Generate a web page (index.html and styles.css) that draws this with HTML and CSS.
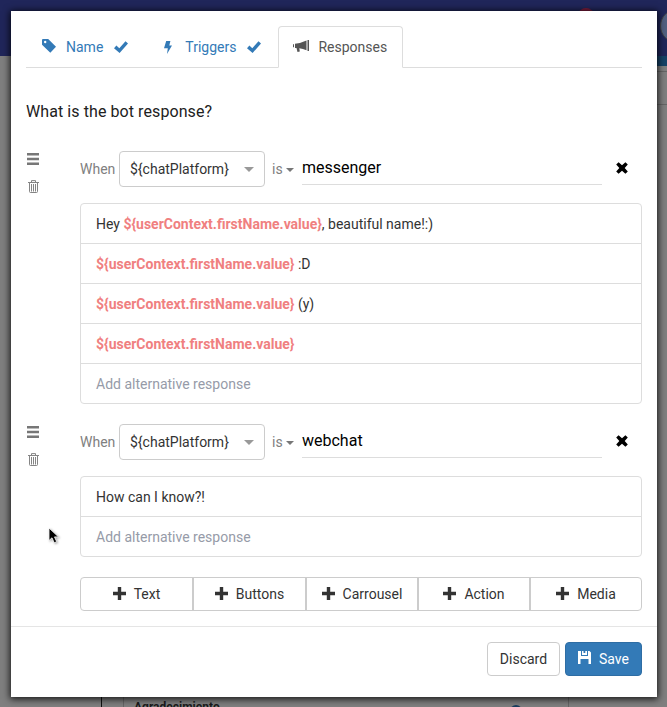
FILE: index.html
```
<!DOCTYPE html>
<html lang="en">
<head>
<meta charset="utf-8">
<title>Bot responses</title>
<link rel="stylesheet" href="styles.css">
</head>
<body>
<svg class="sprite" aria-hidden="true">
  <symbol id="check" viewBox="0 0 14 12"><path d="M0 7.2 2.400 4.600 5.300 7.200 11.500.2 14 2.400 5.600 12Z"/></symbol>
  <symbol id="plus" viewBox="0 0 13 13"><path d="M4.800 0h3.400v4.800H13v3.400H8.200V13H4.800V8.200H0V4.800h4.800Z"/></symbol>
  <symbol id="bars" viewBox="0 0 12 12"><path d="M0 0h12v2.400H0ZM0 4.800h12v2.400H0ZM0 9.600h12V12H0Z"/></symbol>
  <symbol id="trash" viewBox="0 0 11 13"><path fill="none" stroke="currentColor" stroke-width=".9" d="M3.500 2V.6h4V2M0 2.500h11M1.500 3v8.500q0 1 1 1h6q1 0 1-1V3M3.500 4v7.500M5.500 4v7.500M7.500 4v7.500"/></symbol>
  <symbol id="cross" viewBox="0 0 12 12"><path d="M2.600.2 6 3.300 9.400.2 11.800 2.600 8.700 6 11.800 9.400 9.400 11.800 6 8.700 2.600 11.800.2 9.400 3.300 6 .2 2.600Z"/></symbol>
</svg>
<div class="backdrop" aria-hidden="true">
  <div class="topbar"><i class="badge"></i><i class="avatar"></i></div>
  <div class="strip"></div>
  <div class="rule rule-a"></div>
  <div class="rule rule-b"></div>
  <div class="under"><b>Agradecimiento</b><i class="dot"></i></div>
</div>
<main class="modal">
  <section class="body">
    <nav class="tabs">
      <a class="tab"><svg class="tag" viewBox="0 0 14 14"><path fill-rule="evenodd" d="M0 1Q0 0 1 0h5.200L14 7.800 8.300 13.800 0 5.800ZM2 3a1.200 1.200 0 1 0 2.400 0A1.200 1.200 0 1 0 2 3Z"/></svg><span>Name</span><svg class="check"><use href="#check"/></svg></a>
      <a class="tab triggers"><svg class="bolt" viewBox="0 0 8 13"><path d="M2.200 0h4.200L5.300 4.500H8L3 13l.8-5.800H0Z"/></svg><span>Triggers</span><svg class="check"><use href="#check"/></svg></a>
      <a class="tab active"><svg class="horn" viewBox="0 0 16 12"><path d="M14.500 0H16v11h-1.500ZM0 4.200h1v3H0ZM2 3.800q5-.3 11.500-3.300v9.800Q10 8.800 6.300 8.200l.5 3.200-2.300.6-1-4H2Z"/></svg><span>Responses</span></a>
    </nav>
    <h1>What is the bot response?</h1>
    <div class="group">
      <div class="tools"><svg class="bars"><use href="#bars"/></svg><svg class="trash"><use href="#trash"/></svg></div>
      <div class="content">
        <div class="condition">
          <span class="when">When</span><span class="select">${chatPlatform}<i class="arrow"></i></span><span class="is">is</span><i class="caret"></i><span class="input">messenger</span><svg class="cross"><use href="#cross"/></svg>
        </div>
        <ul class="list">
          <li>Hey <b>${userContext.firstName.value}</b>, beautiful name!:)</li>
          <li><b>${userContext.firstName.value}</b> :D</li>
          <li><b>${userContext.firstName.value}</b> (y)</li>
          <li><b>${userContext.firstName.value}</b></li>
          <li class="placeholder">Add alternative response</li>
        </ul>
      </div>
    </div>
    <div class="group">
      <div class="tools"><svg class="bars"><use href="#bars"/></svg><svg class="trash"><use href="#trash"/></svg></div>
      <div class="content">
        <div class="condition">
          <span class="when">When</span><span class="select">${chatPlatform}<i class="arrow"></i></span><span class="is">is</span><i class="caret"></i><span class="input">webchat</span><svg class="cross"><use href="#cross"/></svg>
        </div>
        <ul class="list">
          <li>How can I know?!</li>
          <li class="placeholder">Add alternative response</li>
        </ul>
      </div>
    </div>
    <div class="adders">
      <button><svg class="plus"><use href="#plus"/></svg>Text</button>
      <button><svg class="plus"><use href="#plus"/></svg>Buttons</button>
      <button><svg class="plus"><use href="#plus"/></svg>Carrousel</button>
      <button><svg class="plus"><use href="#plus"/></svg>Action</button>
      <button><svg class="plus"><use href="#plus"/></svg>Media</button>
    </div>
  </section>
  <footer class="footer">
    <button class="btn discard">Discard</button>
    <button class="btn save"><svg class="disk" viewBox="0 0 13 13"><path fill-rule="evenodd" d="M0 0h3v5h7V0h1.500L13 1.500V13h-2.500V8h-8v5H0ZM4 0h1.500v2H7.300V0H9v4H4Z"/></svg>Save</button>
  </footer>
</main>
<svg class="cursor" viewBox="0 0 12 18"><path d="M1 1v12.500l3-2.700 2.200 5 2.500-1.100-2.200-4.800h4Z" stroke="#fff" stroke-width=".8"/></svg>
</body>
</html>
```
FILE: styles.css
```
* { box-sizing: border-box; }
body {
  margin: 0;
  width: 667px;
  height: 707px;
  padding: 11px 10px 10px 11px;
  overflow: hidden;
  background: #7f7f7f;
  color: #333;
  font: 14px/20px Roboto, sans-serif;
}
svg { display: block; flex: none; fill: currentColor; }
.sprite { position: absolute; width: 0; height: 0; }
.backdrop { position: absolute; inset: 0; overflow: hidden; }
.topbar { height: 56px; background: #20265a; }
.badge { position: absolute; left: 578px; top: 8px; width: 16px; height: 16px; border-radius: 50%; background: #7d1c3c; }
.avatar { position: absolute; left: 660px; top: 9px; width: 34px; height: 34px; border: 1px solid #444; border-radius: 50%; background: #536080; }
.strip { height: 10px; margin-left: 650px; background: #164266; }
.rule { position: absolute; left: 650px; right: 0; height: 1px; background: #666; }
.rule-a { top: 71px; }
.rule-b { top: 104px; }
.under {
  position: absolute;
  left: 101px;
  top: 690px;
  width: 468px;
  height: 30px;
  padding-left: 32px;
  border-left: 1px solid #111;
  border-right: 1px solid #666;
  background: linear-gradient(#666, #666) 21px 0 / 1px 100% no-repeat;
  color: #1a1a1a;
  font-size: 12px;
  line-height: 34px;
}
.dot { position: absolute; left: 408px; top: 15px; width: 12px; height: 12px; border-radius: 50%; background: #193d5e; }
.modal {
  position: relative;
  height: 686px;
  background: #fff;
  box-shadow: 0 1px 7px 1px rgba(0, 0, 0, .85);
}
.body { height: 616px; padding: 15px 15px 0; border-bottom: 1px solid #e5e5e5; }
.tabs { display: flex; height: 42px; border-bottom: 1px solid #ddd; }
.tab {
  display: flex;
  align-items: center;
  height: 42px;
  padding: 0 15px;
  border: 1px solid transparent;
  color: #337ab7;
}
.tab.active { border-color: #ddd; border-bottom-color: #fff; border-radius: 4px 4px 0 0; color: #555; }
.tag { width: 14px; height: 14px; margin: -3px 10px 0 0; }
.bolt { width: 8px; height: 13px; margin-right: 13px; }
.horn { width: 16px; height: 12px; margin: -2px 9px 0 -1px; }
.check { width: 14px; height: 12px; margin: -1px 0 0 11px; }
.triggers { padding-left: 19px; margin-right: 1px; }
h1 { margin: 34px 0 29px; color: #212121; font-size: 16px; font-weight: 400; line-height: 20px; letter-spacing: .08px; }
.group { display: flex; margin-bottom: 20px; }
.tools { width: 54px; padding: 2px 1px; color: #777; }
.bars { width: 12px; height: 12px; }
.trash { width: 11px; height: 13px; margin: 15px 0 0 1px; }
.content { flex: 1; }
.condition { display: flex; height: 36px; margin-bottom: 16px; color: #808080; }
.when { width: 39px; padding-top: 8px; }
.select {
  display: flex;
  align-items: center;
  justify-content: space-between;
  width: 146px;
  padding: 0 10px;
  border: 1px solid #ccc;
  border-radius: 4px;
  color: #333;
}
.arrow { border: 5px solid transparent; border-top-color: #999; border-bottom: 0; }
.is { width: 14px; margin-left: 7px; padding-top: 8px; }
.caret { align-self: flex-start; margin: 17px 8px 0 0; border: 4px solid transparent; border-top-color: #777; border-bottom: 0; }
.input { width: 300px; height: 34px; padding-top: 7px; border-bottom: 1px solid #ddd; color: #000; font-size: 16px; }
.cross { width: 12px; height: 12px; margin: 11px 0 0 14px; color: #000; }
.list { margin: 0; padding: 0; border: 1px solid #ddd; border-radius: 4px; list-style: none; }
.list li { height: 40px; padding: 10px 15px; border-bottom: 1px solid #ddd; }
.list li:last-child { height: 39px; border: 0; }
.list b { color: #f08080; }
.list .placeholder { color: #969ba8; }
button { font: inherit; color: #333; background: #fff; }
.adders { display: grid; grid-template-columns: 111px 113px 112px 112px 112px; margin-left: 54px; height: 34px; border: 1px solid #ccc; border-radius: 4px; }
.adders button { display: flex; align-items: center; justify-content: center; gap: 8px; padding: 0; border: 0; background: none; }
.adders button + button { border-left: 2px solid #ccc; }
.plus { width: 13px; height: 13px; margin-top: -1px; }
.footer { display: flex; justify-content: flex-end; gap: 5px; padding: 15px; }
.btn { height: 34px; padding: 0; border: 1px solid #ccc; border-radius: 4px; }
.discard { width: 73px; }
.save { display: flex; align-items: center; justify-content: center; gap: 8px; width: 77px; border-color: #2e6da4; background: #337ab7; color: #fff; }
.disk { width: 13px; height: 13px; margin-top: -3px; }
.cursor { position: absolute; left: 48px; top: 527px; width: 12px; height: 18px; fill: #000; filter: drop-shadow(1px 1px 1px rgba(0, 0, 0, .35)); }
```
